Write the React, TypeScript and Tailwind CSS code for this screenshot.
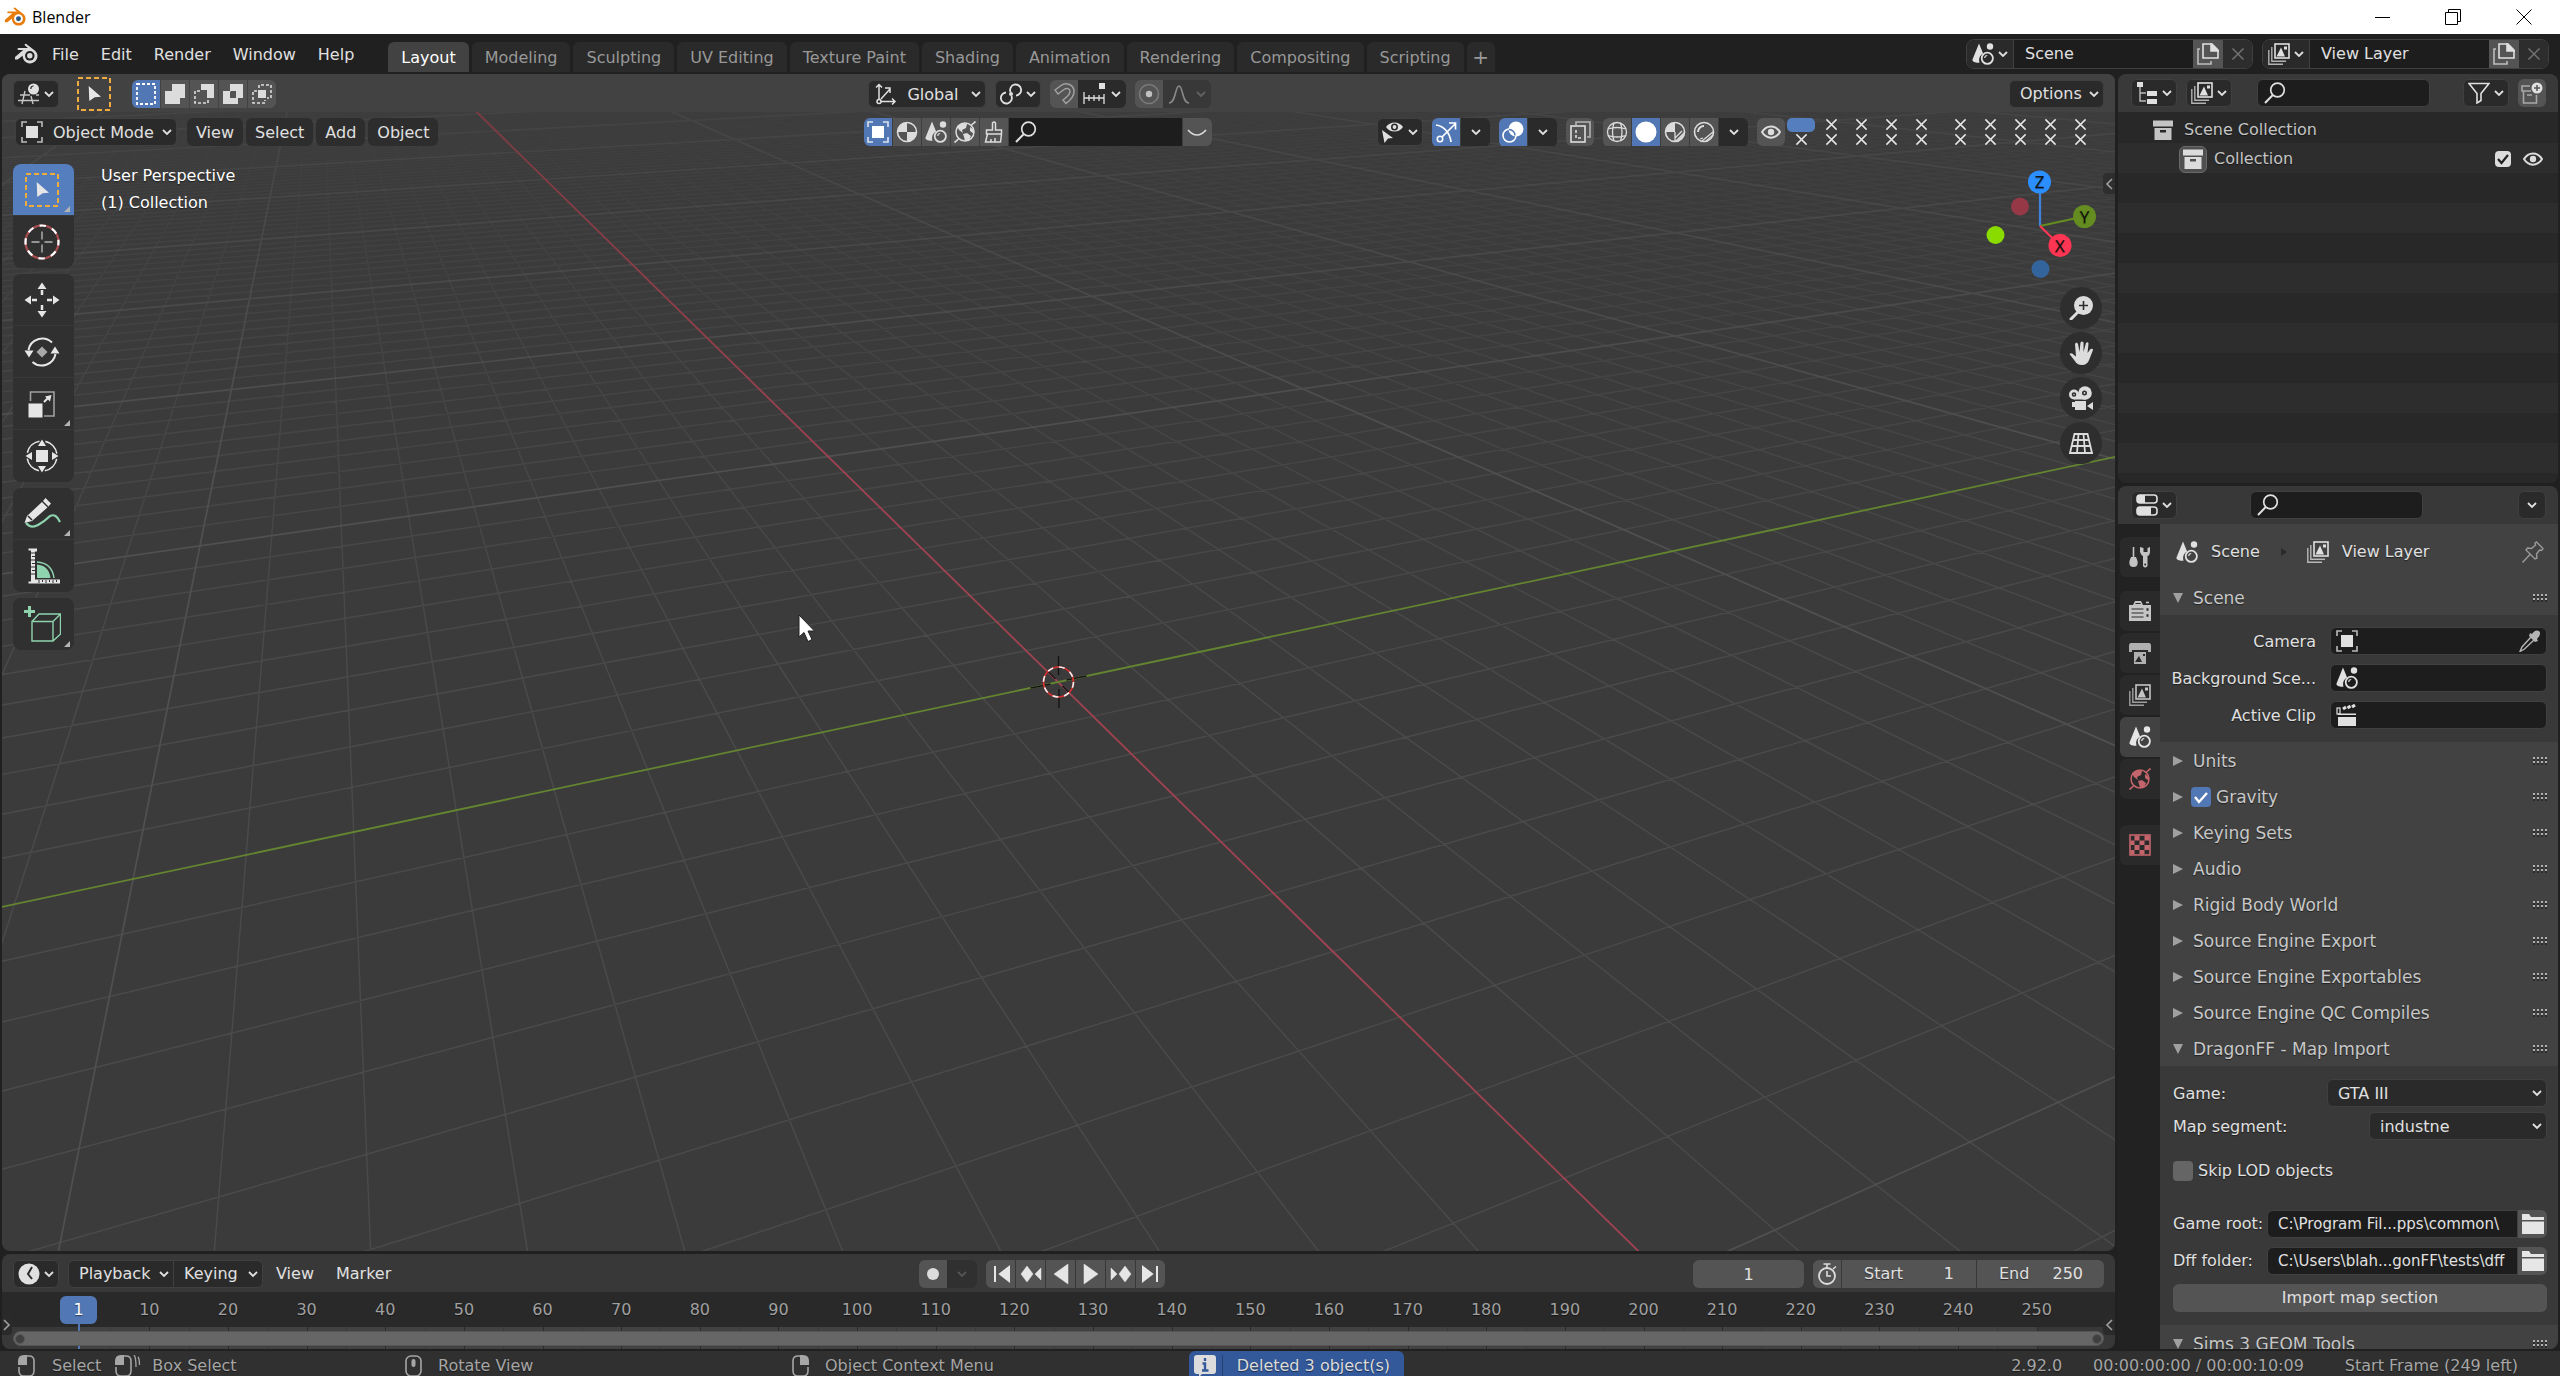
import { ReactNode } from "react";
import clsx from "clsx";

type IconProps = { className?: string };

/* ---------- icons ---------- */

const Svg = ({
  className = "size-[22px]",
  box = "0 0 22 22",
  children,
}: IconProps & { box?: string; children: ReactNode }) => (
  <svg
    viewBox={box}
    className={clsx("shrink-0", className)}
    fill="none"
    stroke="currentColor"
    strokeWidth="1.6"
    aria-hidden="true"
  >
    {children}
  </svg>
);

const Chevron = ({ className = "w-[10px] h-[8px]" }: IconProps) => (
  <Svg box="0 0 10 8" className={className}>
    <path d="M1 2l4 4 4-4" strokeWidth="1.8" />
  </Svg>
);

const BlenderLogo = ({ className, blue }: IconProps & { blue?: boolean }) => (
  <Svg box="0 0 24 24" className={className}>
    <path
      d="M1 17.6h2.6l5-3.8c.2 4.3 3.2 7.6 7.3 7.6 4.2 0 7.6-3.3 7.6-7.3 0-2.3-1-4.2-2.7-5.6L12.3 1.900c-1-.7-2.300.5-1.300 1.500l3 2.500H4.700c-1.600 0-1.600 2 0 2h4.500L1 15z"
      fill="currentColor"
      stroke="none"
    />
    <circle cx="15.8" cy="13.8" r="4.8" fill={blue ? "#fff" : "#202020"} stroke="none" />
    <circle cx="15.8" cy="13.8" r="2.7" fill={blue ? "#265787" : "currentColor"} stroke="none" />
  </Svg>
);

const SceneIcon = ({ className }: IconProps) => (
  <Svg className={className}>
    <path d="M7 .5L.5 16.500c-.6 2 2.500 3.500 7 3.200-1.200-3.700.2-7.500 3.600-9.200z" fill="currentColor" stroke="none" />
    <circle cx="18" cy="3.5" r="3.2" fill="currentColor" stroke="none" />
    <circle cx="15.3" cy="15.3" r="5.6" strokeWidth="1.8" />
    <path d="M12.700 15a2.700 2.700 0 012.500-2.500" strokeWidth="1.2" />
  </Svg>
);

const LayerIcon = ({ className }: IconProps) => (
  <Svg className={className}>
    <path d="M.8 7v14.200H15M3.800 4v14.200H18" strokeWidth="1.4" opacity=".75" />
    <rect x="7" y="1" width="14" height="14" />
    <path d="M8.500 13.500l4.500-9 4 9z" fill="currentColor" stroke="none" />
    <rect x="16" y="3.5" width="3" height="3" fill="currentColor" stroke="none" />
  </Svg>
);

const ObjectIcon = ({ className }: IconProps) => (
  <Svg className={className}>
    <path d="M1 6V1h5M16 1h5v5M21 16v5h-5M6 21H1v-5" opacity=".8" />
    <rect x="5" y="5" width="12" height="12" fill="currentColor" stroke="none" />
  </Svg>
);

const WorldIcon = ({ className }: IconProps) => (
  <Svg className={className}>
    <circle cx="11" cy="11" r="9" strokeWidth="1.5" />
    <path d="M3 5l6-3 4 1-1 4-4 2 1 3-4-3zM9 13l4-1 4 3-2 4-4 1-1-4zM16 6l4 3v4l-4-3z" fill="currentColor" stroke="none" />
    <path d="M17.500 4L21.500.5M4.500 18L.5 21.500" />
  </Svg>
);

const MaterialIcon = ({ className }: IconProps) => (
  <Svg className={className}>
    <circle cx="11" cy="11" r="9.5" />
    <path d="M11 1.500A9.500 9.500 0 001.500 11H11zM11 11v9.500a9.500 9.500 0 009.500-9.500z" fill="currentColor" stroke="none" />
  </Svg>
);

const BrushIcon = () => (
  <Svg>
    <path d="M9.500 9V2q1.500-2 3 0v7h6v4h-15V9zM4.500 13l-2 8h15l1-8M8 21v-3M12 21v-4" strokeWidth="1.5" />
  </Svg>
);

const SearchIcon = ({ className }: IconProps) => (
  <Svg className={className}>
    <circle cx="13.5" cy="8" r="6.8" strokeWidth="1.7" />
    <path d="M8.800 13L1 21" strokeWidth="2" />
  </Svg>
);

const EditorViewportIcon = () => (
  <Svg>
    <path d="M7 8L4 21M13 13l2 8M2 12h10M0 17.500h21M18 12h3" strokeWidth="1.4" opacity=".85" />
    <circle cx="15.5" cy="6" r="5.5" fill="currentColor" stroke="none" />
    <path d="M12.800 6q0-3 2.800-3" stroke="#2a2a2a" strokeWidth="1.2" />
  </Svg>
);

const SelectBoxIcon = ({ className = "size-[36px]" }: IconProps) => (
  <Svg box="0 0 36 36" className={className}>
    <rect x="2" y="2" width="32" height="32" stroke="#f2ac3c" strokeWidth="2" strokeDasharray="5 3" />
    <path d="M12.700 10L25 20.700 18.700 21.300 13.300 25z" fill="#e6e6e6" stroke="none" />
  </Svg>
);

const SelectSetIcon = () => (
  <Svg>
    <rect x="2" y="1" width="18" height="20" strokeDasharray="3 2" strokeWidth="1.8" />
  </Svg>
);
const SelectExtendIcon = () => (
  <Svg>
    <path d="M8 1h13v14h-5v6H1V8h7z" fill="currentColor" stroke="none" />
  </Svg>
);
const SelectSubtractIcon = () => (
  <Svg>
    <path d="M8 1h13v14h-7V7H8z" fill="currentColor" stroke="none" />
    <path d="M7 8H2v12h13v-4" strokeDasharray="3 2" />
  </Svg>
);
const SelectDifferenceIcon = () => (
  <Svg>
    <path d="M8 1h13v14h-5v6H1V8h7zM8 9v6h6V8H9z" fill="currentColor" fillRule="evenodd" stroke="none" />
  </Svg>
);
const SelectIntersectIcon = () => (
  <Svg>
    <rect x="7" y="7" width="8" height="8" fill="currentColor" stroke="none" />
    <path d="M8 5V2h12v13h-4M6 8H2v12h12v-3" strokeDasharray="3 2" />
  </Svg>
);

const AxesIcon = () => (
  <Svg>
    <path d="M4 16V2M1 4.500l3-3 3 3M6 18.500h14M17 15.500l3 3-3 3M6 16L15 6M10 5h5v5" strokeWidth="1.5" />
    <circle cx="4" cy="18.5" r="2" strokeWidth="1.5" />
  </Svg>
);

const PivotIcon = () => (
  <Svg>
    <circle cx="11" cy="11" r="2" fill="currentColor" stroke="none" />
    <path d="M10.500 9A5.500 5.500 0 1116 12.500M11.500 13A5.500 5.500 0 116 9.500" strokeWidth="1.8" />
  </Svg>
);

const MagnetIcon = () => (
  <Svg>
    <path d="M2 7l6-4.500c5-3.500 13-1 13 6 0 5-4 9-8 12l-3-3.500c4-3 7-5.500 7-8.500 0-3-3-4-6-2L5 11z" strokeWidth="1.5" />
  </Svg>
);

const SnapIcon = () => (
  <Svg>
    <path d="M1 9v12M21 11v10M1 15h20M6 12v6M11 12v6M16 12v6" strokeWidth="1.3" />
    <rect x="16" y="0" width="6" height="6" fill="currentColor" stroke="none" />
  </Svg>
);

const ProportionalIcon = () => (
  <Svg>
    <circle cx="11" cy="11" r="9.5" opacity=".35" />
    <circle cx="11" cy="11" r="3.2" fill="currentColor" stroke="none" />
  </Svg>
);

const FalloffIcon = () => (
  <Svg>
    <path d="M1 20C8 20 7 3 11 3s3 17 10 17" />
  </Svg>
);

const VisibilityIcon = () => (
  <Svg>
    <path d="M4 6c4-6 13-6 17 0-4 6-13 6-17 0z" fill="currentColor" stroke="none" />
    <circle cx="12.5" cy="6" r="2.7" stroke="#2a2a2a" />
    <path d="M0 9l11 8-5 .5L2.500 22z" fill="currentColor" stroke="none" />
  </Svg>
);

const GizmoIcon = () => (
  <Svg>
    <path d="M1 4c8 1 14 8 15 17M7 16L20 3M14 2h6.500v6.500" strokeWidth="1.7" />
    <circle cx="5" cy="18" r="2.7" />
  </Svg>
);

const OverlayIcon = () => (
  <Svg>
    <circle cx="14" cy="8" r="7.5" fill="currentColor" stroke="none" />
    <circle cx="7.5" cy="14.5" r="6.5" />
    <path d="M7 8.500a6 6 0 016 6" stroke="#5277b5" strokeWidth="1.5" />
  </Svg>
);

const XrayIcon = () => (
  <Svg>
    <path d="M7 4V1h14v15h-3" opacity=".7" />
    <rect x="2" y="5" width="14" height="16" />
    <path d="M7 9v8h6" strokeDasharray="3 2" />
  </Svg>
);

const WireIcon = () => (
  <Svg>
    <circle cx="11" cy="11" r="9.5" strokeWidth="1.3" />
    <path d="M2 8q9-3 18 0M2 14.500q9 3 18 0M8 2q-3 9 0 18M14.500 2q3 9 0 18" strokeWidth="1.3" />
  </Svg>
);

const SolidIcon = () => (
  <Svg>
    <circle cx="11" cy="11" r="10.5" fill="#fff" stroke="none" />
  </Svg>
);

const ShadedIcon = () => (
  <Svg>
    <circle cx="11" cy="11" r="9.5" />
    <path d="M11 1.500A9.500 9.500 0 001.500 11H11z" fill="currentColor" stroke="none" />
    <path d="M11 11v9M14 20l6-6M11 17l7-7M12 20l8-8" strokeWidth="1.3" />
  </Svg>
);

const RenderedIcon = () => (
  <Svg>
    <circle cx="11" cy="11" r="9.5" />
    <path d="M5 11a6 6 0 016-6" strokeWidth="2" />
    <path d="M9 20l11-9M13 20l7-6M7 18l3-1" strokeWidth="1.3" />
  </Svg>
);

const EyeIcon = ({ className }: IconProps) => (
  <Svg className={className}>
    <path d="M2 11c4.500-7.500 13.500-7.500 18 0-4.500 7.500-13.500 7.500-18 0z" strokeWidth="2" />
    <circle cx="11" cy="11" r="3.2" fill="currentColor" stroke="none" />
  </Svg>
);

const CopyIcon = () => (
  <Svg>
    <path d="M6 1h9l6 6v8H6z" />
    <path d="M14 1v7h7z" fill="currentColor" />
    <path d="M3 6H1v15h13v-3" opacity=".75" />
  </Svg>
);

const CrossIcon = ({ className = "size-[14px]" }: IconProps) => (
  <Svg box="0 0 14 14" className={className}>
    <path d="M1.500 1.500l11 11M12.500 1.500l-11 11" />
  </Svg>
);

const OutlinerIcon = () => (
  <Svg>
    <path d="M4 5v14h6M4 11h6" strokeWidth="1.4" opacity=".8" />
    <path d="M1 0h6v5H1zM11 9h10v5H11zM11 17h10v5H11z" fill="currentColor" stroke="none" />
  </Svg>
);

const FilterIcon = () => (
  <Svg>
    <path d="M1 1.500h20L13 11.500v7L9 21v-9.500z" />
  </Svg>
);

const CollectionIcon = ({ className }: IconProps) => (
  <Svg className={className}>
    <path d="M1 1.500h20v6H1zM2.500 9h17v12h-17zM8 11v2.500h6V11z" fill="currentColor" fillRule="evenodd" stroke="none" />
  </Svg>
);

const NewCollectionIcon = () => (
  <Svg>
    <path d="M9 4H1v5h9M2.500 9v12h13V13M6 13h5" opacity=".6" />
    <circle cx="16" cy="6" r="5.5" fill="currentColor" stroke="none" />
    <path d="M16 3v6M13 6h6" stroke="#555" strokeWidth="1.5" />
  </Svg>
);

const PropertiesIcon = () => (
  <Svg>
    <rect x="1" y="1" width="20" height="8" rx="3" />
    <rect x="1" y="13" width="20" height="8" rx="3" />
    <path d="M3 1h6v8H3q-2 0-2-3V4q0-3 2-3zM3 13h12v8H3q-2 0-2-3v-2q0-3 2-3z" fill="currentColor" stroke="none" />
  </Svg>
);

const ToolTabIcon = () => (
  <Svg>
    <path d="M4.500 1v12" />
    <path d="M2 11h5l1.500 4q1 6-4 6t-4-6z" fill="currentColor" stroke="none" />
    <path d="M11 1v5q1 3 3 4v10q2 3 4.500 0V10q2.500-1 2.500-4V1l-2.500 1v4h-4V2z" fill="currentColor" stroke="none" />
    <circle cx="16.2" cy="18.5" r="1" fill="#2a2a2a" stroke="none" />
  </Svg>
);

const RenderTabIcon = () => (
  <Svg>
    <path d="M0 5h4l2-4h6l2 4h8v16H0z" fill="currentColor" stroke="none" />
    <path d="M2.500 9h12M2.500 13h12M2.500 17h12M6.500 3.500h5" stroke="#2a2a2a" strokeWidth="1.2" />
    <path d="M17.500 9.500h2M17.500 15.500h2" stroke="#2a2a2a" strokeWidth="2.400" />
    <path d="M17 2.500h3" />
  </Svg>
);

const OutputTabIcon = () => (
  <Svg>
    <path d="M2 1h18q2 0 2 3v6h-3V8H3v2H0V4q0-3 2-3zM5 10h12v12H5z" fill="currentColor" stroke="none" />
    <path d="M6 20l4-6 3 6zM14 12h2v2h-2z" fill="#2a2a2a" stroke="none" />
  </Svg>
);

const TextureTabIcon = () => (
  <Svg>
    <rect x="1" y="1" width="20" height="20" />
    <path d="M5.500 1.500h5v5h-5zM15.500 1.500h5v5h-5zM1.500 6.500h4v4.500h-4zM10.500 6.500h5v4.500h-5zM5.500 11h5v5h-5zM15.500 11h5v5h-5zM1.500 16h4v4.500h-4zM10.500 16h5v4.500h-5z" fill="currentColor" stroke="none" />
  </Svg>
);

const PinIcon = () => (
  <Svg>
    <path d="M14.500 1l6.500 6.500-1.500 2-2-.5-3 4 .5 4-2 1L4 9l1.500-2 4 .5 4-3.500-.5-2zM8 13.500l-7.500 8" strokeWidth="1.4" />
  </Svg>
);

const DropperIcon = () => (
  <Svg>
    <path d="M13 4q3-5 7-3 3 3-2 8l1 2-3 1-6-6 1-3z" fill="currentColor" stroke="none" />
    <path d="M12 7l-9 10-2 4.500 4.500-2.500L15 10" strokeWidth="1.4" />
  </Svg>
);

const ClipIcon = () => (
  <Svg>
    <path d="M2 13h18v9H2zM2 9.500h18V11H2z" fill="currentColor" stroke="none" />
    <rect x="1" y="4" width="3" height="6" strokeWidth="1.2" />
    <path d="M7 5l3-2M11.500 4l3-2M16 3l3-2" strokeWidth="3" />
  </Svg>
);

const FolderIcon = () => (
  <Svg>
    <path d="M0 1h7l2 3h13v3H0zM0 8.500h22V21H0z" fill="currentColor" stroke="none" />
  </Svg>
);

const ClockIcon = () => (
  <Svg>
    <circle cx="11" cy="11" r="10.5" fill="currentColor" stroke="none" />
    <path d="M14 4l-4 7 4 5" stroke="#2a2a2a" strokeWidth="2" />
  </Svg>
);

const StopwatchIcon = () => (
  <Svg>
    <circle cx="11" cy="13" r="8" strokeWidth="1.8" />
    <path d="M11 8v5h4M7.500 1h7M11 1v4M17 6l3-2.500" />
  </Svg>
);

const MouseIcon = ({ button }: { button: "left" | "drag" | "middle" | "right" }) => (
  <Svg box="0 0 26 22" className="w-[26px] h-[22px]">
    {(button === "left" || button === "drag") && (
      <>
        <path d="M9 1h2q5 0 5 5v10q0 5-5 5H6q-5 0-5-5v-4" />
        <path d="M0 10V6q0-6 6-6h3v10z" fill="currentColor" stroke="none" />
      </>
    )}
    {button === "middle" && (
      <>
        <rect x="1" y="1" width="15" height="20" rx="5" />
        <rect x="6.5" y="4" width="4" height="8" rx="2" fill="currentColor" stroke="none" />
      </>
    )}
    {button === "right" && (
      <>
        <path d="M8 1H6Q1 1 1 6v10q0 5 5 5h5q5 0 5-5v-4" />
        <path d="M17 10V6q0-6-6-6H8v10z" fill="currentColor" stroke="none" />
      </>
    )}
    {button === "drag" && <path d="M19 0q2 2 2 12M23 2q1.500 2 1.500 8" strokeWidth="1.3" />}
  </Svg>
);

/* tool shelf icons share a 36 unit box */
const CursorToolIcon = () => (
  <Svg box="0 0 36 36" className="size-[36px]">
    <circle cx="18" cy="18" r="16.5" stroke="#a84d50" strokeWidth="2.2" />
    <circle cx="18" cy="18" r="16.5" stroke="#fff" strokeWidth="2.2" strokeDasharray="6.48 6.48" strokeDashoffset="3" />
    <path d="M18 7.500v8M18 20.500v8M7.500 18h8M20.500 18h8" stroke="#b5b5b5" strokeWidth="1.4" />
  </Svg>
);
const MoveToolIcon = () => (
  <Svg box="0 0 36 36" className="size-[36px]">
    <path d="M18 .5l4.500 6.500h-9zM18 35.500l4.500-6.500h-9zM.5 18L7 13.500v9zM35.500 18L29 13.500v9z" fill="currentColor" stroke="none" />
    <path d="M18 8v5M18 23v5M8 18h5M23 18h5" strokeWidth="2.5" />
  </Svg>
);
const RotateToolIcon = () => (
  <Svg box="0 0 36 36" className="size-[36px]">
    <path d="M4.500 16A14 14 0 0128 8.500M31.500 20A14 14 0 018.500 28" strokeWidth="2" />
    <path d="M.5 16.500h9L5 23.500zM26.500 19.500h9L31 12.500z" fill="currentColor" stroke="none" />
    <path d="M18 12.500l5.500 5.500-5.500 5.500-5.500-5.500z" fill="#a8a8a8" stroke="none" />
  </Svg>
);
const ScaleToolIcon = () => (
  <Svg box="0 0 36 36" className="size-[36px]">
    <path d="M6.500 15V6H30v24H20" stroke="#a0a0a0" />
    <rect x="4.5" y="17.5" width="14" height="14" fill="currentColor" stroke="none" />
    <path d="M20 16l4-4" strokeWidth="2" />
    <path d="M27.500 9l-1.500 6.500-5-5z" fill="currentColor" stroke="none" />
  </Svg>
);
const TransformToolIcon = () => (
  <Svg box="0 0 36 36" className="size-[36px]">
    <circle cx="18" cy="18" r="15" strokeDasharray="17.5 6.06" strokeDashoffset="-3" />
    <rect x="12" y="12" width="12" height="12" fill="currentColor" stroke="none" />
    <path d="M18 1.500l4 6.500h-8zM18 34.500l4-6.500h-8zM1.500 18L8 14v8zM34.500 18L28 14v8z" fill="currentColor" stroke="none" />
  </Svg>
);
const AnnotateToolIcon = () => (
  <Svg box="0 0 38 36" className="w-[38px] h-[36px]">
    <path d="M3 27q5 6 12 2t12-9q6-3 10 6" stroke="#8fd3ae" strokeWidth="2.2" />
    <path d="M1.500 27l2.500-7L19 6l5.500 5.500L9 25zM20 5l2.500-3 5.500 5.500-2.500 3z" fill="currentColor" stroke="none" />
    <path d="M5 20l4 4" stroke="#303030" />
  </Svg>
);
const MeasureToolIcon = () => (
  <Svg box="0 0 36 36" className="size-[36px]">
    <path d="M13 14q15 1 17 16" stroke="#8fd3ae" strokeWidth="1.5" />
    <path d="M13 16.500q12 1 13.500 13.500H13z" fill="#8fd3ae" stroke="none" />
    <path d="M4.500.5H13v3H11v28H36v4H4.500v-2H7v-31H4.500z" fill="currentColor" stroke="none" />
    <path d="M11 5h-4M11 8.500h-3M11 12h-4M11 15.500h-3M11 19h-4M11 22.500h-3M11 26h-4M15 32v3M18.500 32v2M22 32v3M25.500 32v2M29 32v3M32.500 32v2" stroke="#303030" strokeWidth="1" />
  </Svg>
);
const AddCubeToolIcon = () => (
  <Svg box="0 0 38 38" className="size-[38px]">
    <g stroke="#8fd3ae">
      <path d="M6.500 1v11M1 6.500h11" strokeWidth="3" />
      <path d="M9 16.500h21V36H9zM9 16.500L16 9h21.500L30 16.500M37.500 9v20L30 36" strokeWidth="1.4" />
    </g>
  </Svg>
);

/* ---------- small building blocks ---------- */

const dark = "bg-[#2a2a2a] border border-[#404040]";
const grey = "bg-[#545454] text-[#dcdcdc]";
const blue = "bg-[#5277b5] text-white";

const DropButton = ({ label, className, children }: { label: string; className?: string; children: ReactNode }) => (
  <button
    aria-label={label}
    className={clsx("flex h-7 w-[46px] shrink-0 items-center justify-center gap-1 rounded-md", dark, className)}
  >
    {children}
    <Chevron />
  </button>
);

const IconButton = ({
  label,
  width = "w-7",
  className,
  children,
}: {
  label: string;
  width?: string;
  className?: string;
  children?: ReactNode;
}) => (
  <button aria-label={label} className={clsx("flex h-7 shrink-0 items-center justify-center", width, className)}>
    {children}
  </button>
);

const SearchField = ({ label, className }: { label: string; className?: string }) => (
  <label className={clsx("flex h-7 items-center bg-[#1d1d1d] pl-[6px]", className)}>
    <SearchIcon />
    <input type="text" aria-label={label} className="min-w-0 flex-1 bg-transparent outline-none" />
  </label>
);

const Picker = ({
  id,
  label,
  value,
  className,
  children,
}: {
  id?: string;
  label?: string;
  value: string;
  className?: string;
  children?: ReactNode;
}) => (
  <div className={clsx("relative flex h-7 shrink-0 items-center rounded-md", dark, className)}>
    {children}
    <select id={id} aria-label={label} className="h-full w-full appearance-none pt-px pl-[10px] outline-none">
      <option>{value}</option>
    </select>
    <Chevron className="pointer-events-none absolute right-[4px] w-[10px] h-[8px]" />
  </div>
);

/* ---------- viewport ---------- */

const FOCAL = 1467;
const DISTANCE = 18.1;
const NEAR = 1;

const depthAt = (x: number, y: number) => DISTANCE - 0.817 * x + 0.365 * y;

const project = (x: number, y: number) => {
  const d = depthAt(x, y);
  const sx = 1056 + (FOCAL * (0.412 * x + 0.911 * y)) / d;
  const sy = 608 - (FOCAL * (-0.404 * x + 0.194 * y)) / d;
  return `${sx.toFixed(1)} ${sy.toFixed(1)}`;
};

// clips a floor segment against the near plane and returns its path
const floorLine = (x1: number, y1: number, x2: number, y2: number) => {
  let a = [x1, y1];
  let b = [x2, y2];
  const da = depthAt(x1, y1);
  const db = depthAt(x2, y2);
  if (da < NEAR && db < NEAR) return "";
  if (da < NEAR || db < NEAR) {
    const t = (NEAR - da) / (db - da);
    const cut = [x1 + t * (x2 - x1), y1 + t * (y2 - y1)];
    if (da < NEAR) a = cut;
    else b = cut;
  }
  return `M${project(a[0], a[1])}L${project(b[0], b[1])}`;
};

const FLOOR = 160;
let minor = "";
let major = "";
for (let i = -FLOOR; i <= FLOOR; i++) {
  if (i === 0) continue;
  const d = floorLine(i, -FLOOR, i, FLOOR) + floorLine(-FLOOR, i, FLOOR, i);
  if (i % 10 === 0) major += d;
  else minor += d;
}

const FloorGrid = () => (
  <svg
    viewBox="0 0 2113 1177"
    preserveAspectRatio="xMidYMid slice"
    className="absolute inset-0 size-full"
    fill="none"
    aria-hidden="true"
  >
    <defs>
      <linearGradient id="minorFade" gradientUnits="userSpaceOnUse" x1="0" y1="38" x2="0" y2="600">
        <stop offset="0" stopColor="#4a4a4a" stopOpacity=".15" />
        <stop offset=".4" stopColor="#4a4a4a" stopOpacity=".6" />
        <stop offset="1" stopColor="#4a4a4a" />
      </linearGradient>
      <linearGradient id="majorFade" gradientUnits="userSpaceOnUse" x1="0" y1="38" x2="0" y2="400">
        <stop offset="0" stopColor="#505050" stopOpacity=".4" />
        <stop offset="1" stopColor="#505050" />
      </linearGradient>
      <linearGradient id="redFade" gradientUnits="userSpaceOnUse" x1="0" y1="38" x2="0" y2="400">
        <stop offset="0" stopColor="#7c3a42" />
        <stop offset="1" stopColor="#a04250" />
      </linearGradient>
    </defs>
    <path d={minor} stroke="url(#minorFade)" strokeWidth="1.4" />
    <path d={major} stroke="url(#majorFade)" strokeWidth="1.7" />
    <path d={floorLine(-FLOOR, 0, FLOOR, 0)} stroke="url(#redFade)" strokeWidth="1.8" />
    <path d={floorLine(0, -FLOOR, 0, FLOOR)} stroke="#648530" strokeWidth="1.8" />
    <g transform="translate(1056.5 608)">
      <path d="M0-26V-7M.5 7V26M-28 6l20-4M8-2l20-4M-10-10L-3-3M4 4l7 7" stroke="#161616" strokeWidth="1.4" />
      <circle r="15" stroke="#d3302f" />
      <circle r="15" stroke="#d3302f" strokeWidth="1.6" />
      <circle r="15" stroke="#f2f2f2" strokeWidth="1.6" strokeDasharray="5.89 5.89" />
    </g>
    <path d="M797 541v22l5-4.500 4 9 4-2-4-8.500h6.500z" fill="#fff" stroke="#222" strokeWidth="1" />
  </svg>
);

const AxisGizmo = () => (
  <svg
    viewBox="0 0 116 116"
    className="mr-1 size-[116px]"
    fontFamily="'Open Sans', sans-serif"
    fontSize="17"
    textAnchor="middle"
  >
    <circle cx="38" cy="38.5" r="9" fill="#963845" />
    <circle cx="58.5" cy="101" r="9" fill="#34649c" />
    <path d="M58 58V14" stroke="#3f83db" strokeWidth="2.2" />
    <path d="M58 58l44-9.500" stroke="#648c20" strokeWidth="2.2" />
    <path d="M58 58l20 19.500" stroke="#ff3653" strokeWidth="2.2" />
    <circle cx="13.5" cy="67" r="9" fill="#8adb00" />
    <circle cx="102.5" cy="48.5" r="11.5" fill="#648c20" />
    <text x="102.5" y="54.5" fill="#111">Y</text>
    <circle cx="57.5" cy="14" r="11.5" fill="#2c8fff" />
    <text x="57.5" y="20" fill="#111">Z</text>
    <circle cx="78" cy="77.5" r="11.5" fill="#ff3653" />
    <text x="78" y="83.5" fill="#111">X</text>
  </svg>
);

const navButtons = [
  {
    label: "Zoom",
    icon: (
      <>
        <circle cx="14.5" cy="9.5" r="9.5" fill="currentColor" stroke="none" />
        <path d="M9 16l-7 7" strokeWidth="3" strokeLinecap="round" />
        <path d="M14.500 5v9M10 9.500h9" stroke="#2e2e2e" />
      </>
    ),
  },
  {
    label: "Move view",
    icon: (
      <path
        d="M.5 13q2-2 5 1.500l1.500 1L6 3q1.500-3 3 0l1.500 8L11.500 1.500q1.500-2 3 0v9.500l2.500-9q2-1.500 2.500.5L18.500 12l3-4q2.500-1 2.500 1l-3.500 9q-2 6-7.500 6-5 0-7.500-4.500z"
        fill="currentColor"
        stroke="none"
      />
    ),
  },
  {
    label: "Camera view",
    icon: (
      <>
        <circle cx="5" cy="8.5" r="5" fill="currentColor" stroke="none" />
        <circle cx="16" cy="7" r="6.8" fill="currentColor" stroke="none" />
        <path d="M5 8h12v5.500H5zM6 15h11v9H6zM3 16h3v5H3zM18 20l6-4v8z" fill="currentColor" stroke="none" />
        <circle cx="5" cy="8.5" r="1.5" stroke="#2e2e2e" />
        <circle cx="15.5" cy="7" r="1.7" stroke="#2e2e2e" />
      </>
    ),
  },
  {
    label: "Perspective",
    icon: <path d="M5.500 3h13L23 22H1zM4 9h16M2.500 15h19M9.500 3L8 22M14.500 3L16 22" strokeWidth="1.8" />,
  },
];

const toolGroups = [
  [
    { label: "Select Box", icon: <SelectBoxIcon />, active: true, more: true },
    { label: "Cursor", icon: <CursorToolIcon /> },
  ],
  [
    { label: "Move", icon: <MoveToolIcon /> },
    { label: "Rotate", icon: <RotateToolIcon /> },
    { label: "Scale", icon: <ScaleToolIcon />, more: true },
    { label: "Transform", icon: <TransformToolIcon /> },
  ],
  [
    { label: "Annotate", icon: <AnnotateToolIcon />, more: true },
    { label: "Measure", icon: <MeasureToolIcon /> },
  ],
  [{ label: "Add Cube", icon: <AddCubeToolIcon />, more: true }],
];

const LayerCells = ({ first }: { first?: boolean }) => (
  <div className="grid grid-cols-5 gap-x-[2px] gap-y-[1px]">
    {Array.from({ length: 10 }, (_, i) => (
      <button
        key={i}
        aria-label={`Layer ${i + 1}`}
        className={clsx(
          "flex h-[14px] w-7 items-center justify-center rounded-[5px] text-[#e6e6e6]",
          first && i === 0 && "bg-[#557ebf]"
        )}
      >
        {!(first && i === 0) && <CrossIcon className="size-[13px]" />}
      </button>
    ))}
  </div>
);

const Viewport = () => (
  <section className="relative flex min-h-0 flex-1 flex-col overflow-hidden rounded-lg bg-[#3b3b3b]">
    <FloorGrid />
    <div className="relative flex h-[38px] shrink-0 items-center bg-[#424242] px-[11px] pt-[2px]">
      <DropButton label="Editor type">
        <EditorViewportIcon />
      </DropButton>
      <div className="ml-[17px] mr-5">
        <SelectBoxIcon />
      </div>
      <div className="flex gap-px overflow-hidden rounded-md">
        <IconButton label="Set selection" className={blue}><SelectSetIcon /></IconButton>
        <IconButton label="Extend selection" className={grey}><SelectExtendIcon /></IconButton>
        <IconButton label="Subtract selection" className={grey}><SelectSubtractIcon /></IconButton>
        <IconButton label="Invert selection" className={grey}><SelectDifferenceIcon /></IconButton>
        <IconButton label="Intersect selection" className={grey}><SelectIntersectIcon /></IconButton>
      </div>
      <div className="grow-26" />
      <div className="flex gap-[9px]">
        <Picker label="Orientation" value="Global" className="w-[118px] pl-[6px]">
          <AxesIcon />
        </Picker>
        <DropButton label="Pivot point"><PivotIcon /></DropButton>
        <div className="flex overflow-hidden rounded-md">
          <IconButton label="Snap" className="bg-[#545454] text-[#a0a0a0]"><MagnetIcon /></IconButton>
          <button aria-label="Snapping" className="flex w-12 items-center justify-center gap-[6px] bg-[#2a2a2a]">
            <SnapIcon />
            <Chevron />
          </button>
        </div>
        <div className="flex overflow-hidden rounded-md">
          <IconButton label="Proportional editing" className="bg-[#545454] text-[#c0c0c0]"><ProportionalIcon /></IconButton>
          <button aria-label="Falloff" className="flex w-12 items-center justify-center gap-[6px] bg-[#383838] text-[#8a8a8a]">
            <FalloffIcon />
            <Chevron className="w-[10px] h-[8px] opacity-50" />
          </button>
        </div>
      </div>
      <div className="grow-35" />
      <button className={clsx("flex h-7 w-[95px] items-center justify-between rounded-md pl-[10px] pr-1", dark)}>
        Options
        <Chevron />
      </button>
    </div>

    <div className="relative mt-[6px] flex h-7 shrink-0 items-center pl-[13px] pr-[21px]">
      <Picker label="Mode" value="Object Mode" className="w-[162px] pl-[5px]">
        <ObjectIcon />
      </Picker>
      <nav className="ml-[10px] flex gap-[3px]">
        {["View", "Select", "Add", "Object"].map((item) => (
          <button key={item} className="h-7 rounded-md bg-[#2d2d2d] px-[9px] pt-px">
            {item}
          </button>
        ))}
      </nav>
      <div className="grow-18" />
      <div className="flex gap-px overflow-hidden rounded-md">
        <IconButton label="Object filter" className={blue}><ObjectIcon /></IconButton>
        <IconButton label="Material filter" className={grey}><MaterialIcon /></IconButton>
        <IconButton label="Scene filter" className={grey}><SceneIcon /></IconButton>
        <IconButton label="World filter" className={grey}><WorldIcon /></IconButton>
        <IconButton label="Brush filter" className={grey}><BrushIcon /></IconButton>
        <SearchField label="Search data" className="w-[173px]" />
        <IconButton label="Expand" width="w-[29px]" className={grey}>
          <Svg>
            <path d="M2 9q9 10 18 0" />
          </Svg>
        </IconButton>
      </div>
      <div className="grow-7" />
      <div className="flex gap-[9px]">
        <DropButton label="Visibility"><VisibilityIcon /></DropButton>
        <div className="flex gap-px overflow-hidden rounded-md">
          <IconButton label="Gizmos" className={blue}><GizmoIcon /></IconButton>
          <IconButton label="Gizmo options" width="w-[29px]" className="bg-[#2a2a2a]"><Chevron /></IconButton>
        </div>
        <div className="flex gap-px overflow-hidden rounded-md">
          <IconButton label="Overlays" className={blue}><OverlayIcon /></IconButton>
          <IconButton label="Overlay options" width="w-[29px]" className="bg-[#2a2a2a]"><Chevron /></IconButton>
        </div>
        <IconButton label="X-ray" className={clsx("rounded-md", grey)}><XrayIcon /></IconButton>
        <div className="flex gap-px overflow-hidden rounded-md">
          <IconButton label="Wireframe" className={grey}><WireIcon /></IconButton>
          <IconButton label="Solid" className={blue}><SolidIcon /></IconButton>
          <IconButton label="Material preview" className={grey}><ShadedIcon /></IconButton>
          <IconButton label="Rendered" className={grey}><RenderedIcon /></IconButton>
          <IconButton label="Shading options" width="w-[29px]" className="bg-[#2a2a2a]"><Chevron /></IconButton>
        </div>
        <div className="flex gap-[2px]">
          <IconButton label="Show layers" className={clsx("rounded-md", grey)}><EyeIcon /></IconButton>
          <div className="flex gap-[11px]">
            <LayerCells first />
            <LayerCells />
          </div>
        </div>
      </div>
    </div>

    <div className="relative mt-[18px] flex pl-[11px]">
      <div className="flex flex-col gap-[6px]">
        {toolGroups.map((group, i) => (
          <div key={i} className="flex w-[61px] flex-col overflow-hidden rounded-lg bg-[#303030]">
            {group.map((tool) => (
              <button
                key={tool.label}
                aria-label={tool.label}
                className={clsx(
                  "relative flex h-[52px] items-center justify-center border-b border-[#393939] pr-[3px] text-[#e6e6e6] last:border-b-0",
                  "active" in tool && "bg-[#557ebf]"
                )}
              >
                {tool.icon}
                {"more" in tool && (
                  <svg viewBox="0 0 6 6" className="absolute bottom-[3px] right-1 size-[6px]" aria-hidden="true">
                    <path d="M6 0v6H0z" fill="#b4b4b4" />
                  </svg>
                )}
              </button>
            ))}
          </div>
        ))}
      </div>
      <div className="ml-[27px] -mt-[2px] leading-[27px] text-white">
        <p>User Perspective</p>
        <p>(1) Collection</p>
      </div>
    </div>

    <div className="absolute right-[13px] top-[94px] flex flex-col items-end">
      <AxisGizmo />
      <div className="mt-[3px] flex flex-col gap-[3px]">
        {navButtons.map((nav) => (
          <button
            key={nav.label}
            aria-label={nav.label}
            className="flex size-[42px] items-center justify-center rounded-full bg-[#2e2e2e] text-[#dcdcdc]"
          >
            <Svg box="0 0 24 24" className="size-6">{nav.icon}</Svg>
          </button>
        ))}
      </div>
    </div>
    <button
      aria-label="Open sidebar"
      className="absolute right-0 top-[99px] flex h-[21px] w-3 items-center justify-center rounded-l bg-[#2e2e2e] text-[#a0a0a0]"
    >
      <Svg box="0 0 8 12" className="w-2 h-3"><path d="M7 1L2 6l5 5" /></Svg>
    </button>
  </section>
);

/* ---------- timeline ---------- */

const transport = [
  { label: "Jump to start", d: "M5 3v16M19 4v14l-9-7z" },
  { label: "Previous keyframe", d: "M7 3l6 8-6 8-6-8zM21 5v12l-6-6z" },
  { label: "Play backwards", d: "M18 1v20L4 11z" },
  { label: "Play", d: "M4 1v20l14-10z" },
  { label: "Next keyframe", d: "M15 3l6 8-6 8-6-8zM1 5v12l6-6z" },
  { label: "Jump to end", d: "M17 3v16M3 4v14l9-7z" },
];

const frames = Array.from({ length: 25 }, (_, i) => (i + 1) * 10);

const Timeline = () => (
  <section className="relative flex h-[95px] shrink-0 flex-col overflow-hidden rounded-lg bg-[#383838]">
    <div className="flex h-[38px] shrink-0 items-center px-[11px] pt-[2px]">
      <DropButton label="Timeline editor"><ClockIcon /></DropButton>
      <div className={clsx("ml-[9px] flex h-7 rounded-md", dark)}>
        <button className="flex w-[105px] items-center justify-between border-r border-[#404040] pl-[10px] pr-1">
          Playback <Chevron />
        </button>
        <button className="flex w-[88px] items-center justify-between pl-[10px] pr-1">
          Keying <Chevron />
        </button>
      </div>
      <button className="ml-[13px]">View</button>
      <button className="ml-[22px]">Marker</button>
      <div className="grow" />
      <div className="flex overflow-hidden rounded-md">
        <IconButton label="Auto keying" className={grey}>
          <Svg><circle cx="11" cy="11" r="6" fill="currentColor" stroke="none" /></Svg>
        </IconButton>
        <IconButton label="Auto keying options" width="w-[30px]" className="bg-[#303030] text-[#555]"><Chevron /></IconButton>
      </div>
      <div className="ml-[9px] flex gap-px overflow-hidden rounded-md">
        {transport.map((item) => (
          <IconButton key={item.label} label={item.label} width="w-[29px]" className="bg-[#545454] text-[#e6e6e6]">
            <Svg>
              <path d={item.d} fill="currentColor" strokeWidth={item.label.startsWith("Jump") ? 2 : 0.5} />
            </Svg>
          </IconButton>
        ))}
      </div>
      <div className="grow" />
      <input
        aria-label="Current frame"
        defaultValue="1"
        className="h-7 w-[111px] rounded-md bg-[#545454] text-center outline-none"
      />
      <div className="ml-[9px] flex h-7 gap-px overflow-hidden rounded-md">
        <IconButton label="Use preview range" className={grey}><StopwatchIcon /></IconButton>
        <label className="flex w-[134px] items-center bg-[#545454] pl-[22px] pr-[22px]">
          Start
          <input defaultValue="1" className="w-0 min-w-0 flex-1 text-right outline-none" />
        </label>
        <label className="flex w-[127px] items-center bg-[#545454] pl-[22px] pr-[21px]">
          End
          <input defaultValue="250" className="w-0 min-w-0 flex-1 text-right outline-none" />
        </label>
      </div>
    </div>

    <div className="relative flex flex-1 flex-col">
      <div className="flex h-[35px] items-center bg-[#292929] pt-px pl-[108px] pr-[39px] text-[#a0a0a0]">
        {frames.map((frame) => (
          <span key={frame} className="min-w-0 flex-1 text-center">
            {frame}
          </span>
        ))}
      </div>
      <div className="flex flex-1 pl-[76px] pr-[39px]">
        <div className="w-8 bg-[#424242]" />
        {frames.map((frame) => (
          <div key={frame} className="flex flex-1">
            <div className="flex-1 border-l border-[#3a3a3a] bg-[#424242]" />
            <div className={clsx("flex-1 border-l border-[#2c2c2c]", frame !== 250 && "bg-[#424242]")} />
          </div>
        ))}
      </div>
      <div className="absolute left-[76px] top-7 h-full w-[2px] bg-[#5277b5]" />
      <div className="absolute left-[58px] top-1 flex h-7 w-[37px] items-center justify-center rounded-md bg-[#5277b5] text-white">
        1
      </div>
      <div className="absolute inset-x-[11px] bottom-[3px] flex h-[15px] items-center justify-between rounded-full border border-[#555] bg-[#666] px-px">
        <span className="size-[10px] rounded-full border border-[#585858] bg-[#404040]" />
        <span className="size-[10px] rounded-full border border-[#585858] bg-[#404040]" />
      </div>
      <button
        aria-label="Open channels"
        className="absolute left-0 top-[22px] flex h-[21px] w-[10px] items-center justify-center rounded-r bg-[#2a2a2a] text-[#a0a0a0]"
      >
        <Svg box="0 0 8 12" className="w-2 h-3"><path d="M1 1l5 5-5 5" /></Svg>
      </button>
      <button
        aria-label="Open timeline sidebar"
        className="absolute right-0 top-[22px] flex h-[21px] w-3 items-center justify-center rounded-l bg-[#2a2a2a] text-[#a0a0a0]"
      >
        <Svg box="0 0 8 12" className="w-2 h-3"><path d="M7 1L2 6l5 5" /></Svg>
      </button>
    </div>
  </section>
);

/* ---------- outliner ---------- */

const Outliner = () => (
  <section className="flex h-[409px] shrink-0 flex-col overflow-hidden rounded-lg bg-[#282828]">
    <div className="flex h-[38px] shrink-0 items-center bg-[#393939] px-3">
      <DropButton label="Outliner editor" className="ml-px"><OutlinerIcon /></DropButton>
      <DropButton label="Display mode" className="ml-[9px]"><LayerIcon /></DropButton>
      <SearchField label="Filter outliner" className="ml-[25px] w-[173px] rounded-md border border-[#404040]" />
      <DropButton label="Filter" className="ml-auto"><FilterIcon /></DropButton>
      <IconButton label="New collection" className="ml-[9px] rounded-md bg-[#545454]"><NewCollectionIcon /></IconButton>
    </div>
    <div className="text-[#c4c4c4]">
      <div className="flex h-[31px] items-center gap-[10px] pt-1 pl-[34px]">
        <CollectionIcon />
        Scene Collection
      </div>
      <div className="flex h-[30px] items-center bg-[#2d2d2d] pt-[2px] pl-[61px] pr-[14px]">
        <span className="flex h-[27px] w-7 items-center justify-center rounded-md border border-[#6a6a6a] bg-[#505050] text-[#dcdcdc]">
          <CollectionIcon />
        </span>
        <span className="ml-[7px] flex-1">Collection</span>
        <label className="relative mr-[11px] flex size-4">
          <input type="checkbox" defaultChecked aria-label="Exclude from view layer" className="size-4 appearance-none rounded-sm bg-[#dcdcdc]" />
          <Svg box="0 0 16 16" className="pointer-events-none absolute inset-0 size-4 text-[#222]">
            <path d="M3 8l3.500 4L13 4" strokeWidth="2.2" />
          </Svg>
        </label>
        <button aria-label="Hide in viewport"><EyeIcon className="size-[22px] text-[#dcdcdc]" /></button>
      </div>
    </div>
    {Array.from({ length: 11 }, (_, i) => (
      <div key={i} className="h-[30px] shrink-0 even:bg-[#2d2d2d] odd:bg-[#282828]" />
    ))}
  </section>
);

/* ---------- properties ---------- */

const tabs = [
  { label: "Tool", icon: <ToolTabIcon />, className: "mt-[13px] bg-[#2a2a2a] text-[#c4c4c4]" },
  { label: "Render", icon: <RenderTabIcon />, className: "mt-[14px] bg-[#2a2a2a] text-[#c4c4c4]" },
  { label: "Output", icon: <OutputTabIcon />, className: "mt-[2px] bg-[#2a2a2a] text-[#b0b0b0]" },
  { label: "View Layer", icon: <LayerIcon />, className: "mt-[2px] bg-[#2a2a2a] text-[#c4c4c4]" },
  { label: "Scene", icon: <SceneIcon />, className: "mt-[2px] bg-[#424242] text-[#e6e6e6]" },
  { label: "World", icon: <WorldIcon />, className: "mt-[2px] bg-[#2a2a2a] text-[#c4656c]" },
  { label: "Texture", icon: <TextureTabIcon />, className: "mt-[26px] bg-[#2a2a2a] text-[#c4656c]" },
];

const PanelHeader = ({ title, open, checked }: { title: string; open?: boolean; checked?: boolean }) => (
  <div className="flex h-9 shrink-0 items-center pt-px pl-[13px] pr-[11px] text-[17px] text-[#c8c8c8]">
    <button className="flex items-center" aria-expanded={!!open} aria-label={title}>
      <svg viewBox="0 0 10 10" className="size-[10px]" aria-hidden="true">
        <path d={open ? "M0 0h10L5 10z" : "M0 0v10l10-5z"} fill="#a0a0a0" />
      </svg>
    </button>
    {checked ? (
      <label className="ml-2 flex items-center gap-[5px]">
        <span className="relative flex size-5">
          <input type="checkbox" defaultChecked className="size-5 appearance-none rounded bg-[#5277b5]" />
          <Svg box="0 0 20 20" className="pointer-events-none absolute inset-0 size-5 text-white">
            <path d="M4 10l4 5 8-9" strokeWidth="2.4" />
          </Svg>
        </span>
        {title}
      </label>
    ) : (
      <span className="ml-[10px]">{title}</span>
    )}
    <svg viewBox="0 0 14 8" className="ml-auto w-[14px] h-2" aria-hidden="true">
      <path d="M0 1h14M0 5h14" stroke="#b0b0b0" strokeWidth="2" strokeDasharray="2 2" />
      <path d="M0 3h14M0 7h14" stroke="#141414" strokeWidth="1.2" strokeDasharray="2 2" />
    </svg>
  </div>
);

const dataFields = [
  { id: "camera", label: "Camera", icon: <ObjectIcon />, pick: true },
  { id: "background", label: "Background Sce...", icon: <SceneIcon /> },
  { id: "clip", label: "Active Clip", icon: <ClipIcon /> },
];

const pathFields = [
  { id: "game-root", label: "Game root:", value: "C:\\Program Fil...pps\\common\\" },
  { id: "dff-folder", label: "Dff folder:", value: "C:\\Users\\blah...gonFF\\tests\\dff" },
];

const Properties = () => (
  <section className="flex min-h-0 flex-1 flex-col overflow-hidden rounded-lg bg-[#222222]">
    <div className="flex h-[38px] shrink-0 items-center bg-[#383838] px-3">
      <DropButton label="Properties editor" className="ml-px"><PropertiesIcon /></DropButton>
      <SearchField label="Search properties" className="ml-[73px] w-[173px] rounded-md border border-[#404040]" />
      <IconButton label="Options" className={clsx("ml-auto rounded-md", dark)}><Chevron /></IconButton>
    </div>
    <div className="flex min-h-0 flex-1">
      <div className="flex w-[42px] shrink-0 flex-col pl-[2px]">
        {tabs.map((tab) => (
          <button
            key={tab.label}
            aria-label={tab.label}
            className={clsx("flex h-10 w-10 shrink-0 items-center justify-center rounded-l-md", tab.className)}
          >
            {tab.icon}
          </button>
        ))}
      </div>
      <div className="flex min-w-0 flex-1 flex-col overflow-hidden bg-[#424242]">
        <div className="flex h-[55px] shrink-0 items-center pl-4 pr-[14px]">
          <SceneIcon />
          <span className="ml-[13px]">Scene</span>
          <svg viewBox="0 0 6 8" className="ml-[21px] w-[6px] h-2" aria-hidden="true">
            <path d="M0 0v8l6-4z" fill="#2a2a2a" />
          </svg>
          <span className="ml-5"><LayerIcon /></span>
          <span className="ml-[13px]">View Layer</span>
          <button aria-label="Pin" className="ml-auto text-[#9a9a9a]"><PinIcon /></button>
        </div>
        <PanelHeader title="Scene" open />
        <div className="flex shrink-0 flex-col gap-[9px] bg-[#393939] pt-3 pr-[11px] pb-[13px] pl-2">
          {dataFields.map((field) => (
            <div key={field.id} className="flex items-center">
              <label htmlFor={field.id} className="flex-1 whitespace-nowrap pt-px pr-[14px] text-right">
                {field.label}
              </label>
              <div className="flex h-7 w-[217px] shrink-0 items-center rounded-md border border-[#404040] bg-[#1d1d1d] px-[5px]">
                {field.icon}
                <input id={field.id} className="min-w-0 flex-1 px-2 outline-none" />
                {field.pick && (
                  <button aria-label="Eyedropper" className="text-[#b4b4b4]"><DropperIcon /></button>
                )}
              </div>
            </div>
          ))}
        </div>
        <PanelHeader title="Units" />
        <PanelHeader title="Gravity" checked />
        <PanelHeader title="Keying Sets" />
        <PanelHeader title="Audio" />
        <PanelHeader title="Rigid Body World" />
        <PanelHeader title="Source Engine Export" />
        <PanelHeader title="Source Engine Exportables" />
        <PanelHeader title="Source Engine QC Compiles" />
        <PanelHeader title="DragonFF - Map Import" open />
        <div className="shrink-0 bg-[#393939] py-[13px] pr-[11px] pl-[13px]">
          <div className="flex items-center justify-between">
            <label htmlFor="game" className="pt-px">Game:</label>
            <Picker id="game" value="GTA III" className="w-[220px]" />
          </div>
          <div className="mt-[5px] flex items-center justify-between">
            <label htmlFor="segment" className="pt-px">Map segment:</label>
            <Picker id="segment" value="industne" className="w-[178px]" />
          </div>
          <label className="mt-[21px] flex items-center gap-[5px]">
            <input type="checkbox" className="size-5 appearance-none rounded bg-[#656565]" />
            Skip LOD objects
          </label>
          <div className="mt-[29px] flex flex-col gap-[9px]">
            {pathFields.map((field) => (
              <div key={field.id} className="flex items-center">
                <label htmlFor={field.id} className="flex-1 whitespace-nowrap">{field.label}</label>
                <input
                  id={field.id}
                  defaultValue={field.value}
                  className="h-7 w-[251px] rounded-l-md border border-[#404040] bg-[#1d1d1d] pl-[10px] text-[15px] outline-none"
                />
                <IconButton label={`Browse ${field.label}`} width="w-[29px]" className="rounded-r-md bg-[#545454] text-[#e6e6e6]">
                  <FolderIcon />
                </IconButton>
              </div>
            ))}
            <button className="h-7 rounded-md bg-[#545454]">Import map section</button>
          </div>
        </div>
        <PanelHeader title="Sims 3 GEOM Tools" open />
      </div>
    </div>
  </section>
);

/* ---------- window chrome ---------- */

const menus = ["File", "Edit", "Render", "Window", "Help"];
const workspaces = [
  "Layout",
  "Modeling",
  "Sculpting",
  "UV Editing",
  "Texture Paint",
  "Shading",
  "Animation",
  "Rendering",
  "Compositing",
  "Scripting",
  "+",
];

const DataBlock = ({ name, children }: { name: string; children: ReactNode }) => (
  <div className="flex h-[30px] overflow-hidden rounded-lg border border-[#404040]">
    <button aria-label={`Browse ${name}`} className="flex w-[46px] items-center justify-center gap-1 bg-[#2a2a2a]">
      {children}
      <Chevron />
    </button>
    <input
      aria-label={name}
      defaultValue={name}
      className="w-[180px] border-l border-[#404040] bg-[#1d1d1d] pl-[11px] outline-none"
    />
    <IconButton label={`New ${name}`} width="w-[30px]" className="bg-[#545454]"><CopyIcon /></IconButton>
    <IconButton label={`Remove ${name}`} width="w-[29px]" className="bg-[#2d2d2d] text-[#707070]"><CrossIcon /></IconButton>
  </div>
);

const TitleBar = () => (
  <header className="flex h-[34px] shrink-0 items-center bg-white pl-1 font-['Open_Sans',sans-serif] text-black text-shadow-none">
    <BlenderLogo blue className="size-[22px] text-[#e87d0d]" />
    <h1 className="ml-[6px]">Blender</h1>
    <div className="ml-auto flex">
      <button aria-label="Minimize" className="flex w-[70px] justify-center">
        <Svg box="0 0 16 16" className="size-4"><path d="M0 8.500h15" strokeWidth="1" /></Svg>
      </button>
      <button aria-label="Restore" className="flex w-[70px] justify-center">
        <Svg box="0 0 16 16" className="size-4">
          <path d="M.5 3.500h12v12H.5zM3.500 3.500v-3h12v12h-3" strokeWidth="1" />
        </Svg>
      </button>
      <button aria-label="Close" className="flex w-[72px] justify-center">
        <Svg box="0 0 16 16" className="size-4"><path d="M.5.5l15 15M15.500.5l-15 15" strokeWidth="1" /></Svg>
      </button>
    </div>
  </header>
);

const MenuBar = () => (
  <div className="flex h-10 shrink-0 pl-[14px] pr-[11px]">
    <BlenderLogo className="mt-2 size-6 text-[#dcdcdc]" />
    <nav className="ml-[14px] flex gap-[22px] pt-px">
      {menus.map((menu) => (
        <button key={menu}>{menu}</button>
      ))}
    </nav>
    <nav className="mt-2 ml-[34px] flex h-[30px] gap-[3px]">
      {workspaces.map((name, i) => (
        <button
          key={name}
          className={clsx(
            "rounded-t-md",
            name === "+" ? "w-7 text-xl" : "px-[13px] pt-px",
            i === 0 ? "bg-[#424242] text-white" : "bg-[#2a2a2a] text-[#989898]"
          )}
        >
          {name}
        </button>
      ))}
    </nav>
    <div className="ml-auto mt-[5px] flex gap-[9px]">
      <DataBlock name="Scene"><SceneIcon /></DataBlock>
      <DataBlock name="View Layer"><LayerIcon /></DataBlock>
    </div>
  </div>
);

const StatusBar = () => (
  <footer className="flex h-[25px] shrink-0 overflow-hidden bg-[#303030] pt-[4px] leading-[22px] text-[#a6a6a6]">
    <div className="flex w-[387px] gap-2 pl-[18px]">
      <MouseIcon button="left" />
      <span className="mr-[6px]">Select</span>
      <MouseIcon button="drag" />
      <span className="ml-[3px]">Box Select</span>
    </div>
    <div className="flex w-[387px] gap-[7px] pl-[18px]">
      <MouseIcon button="middle" />
      Rotate View
    </div>
    <div className="flex flex-1 gap-[7px] pl-[18px]">
      <MouseIcon button="right" />
      Object Context Menu
    </div>
    <div className="-mt-1 flex rounded-t-md bg-[#34599a] pt-1 text-[#dcdcdc]">
      <span className="flex w-[34px] justify-center border-r border-[#27406e]">
        <Svg>
          <path d="M3 0h16q3 0 3 3v13q0 3-3 3H8l-3 3v-3H3q-3 0-3-3V3q0-3 3-3z" fill="currentColor" stroke="none" />
          <path d="M11 3v3M8.500 8.500H11V15M8 15.500h6.500" stroke="#34599a" strokeWidth="2.4" />
        </Svg>
      </span>
      <span className="px-[14px]">Deleted 3 object(s)</span>
    </div>
    <div className="flex w-[1156px] justify-end gap-[31px] pr-[42px]">
      <span>2.92.0</span>
      <span>00:00:00:00 / 00:00:10:09</span>
      <span className="ml-[10px]">Start Frame (249 left)</span>
    </div>
  </footer>
);

const App = () => (
  <div className="flex h-screen flex-col overflow-hidden bg-[#202020] font-['DejaVu_Sans',sans-serif] text-[16px] leading-5 text-[#e0e0e0] text-shadow-[0_1px_1px_rgb(0_0_0/0.5)]">
    <TitleBar />
    <MenuBar />
    <main className="flex min-h-0 flex-1 gap-[3px] px-[2px] pb-[2px]">
      <div className="flex min-w-0 flex-1 flex-col gap-[3px]">
        <Viewport />
        <Timeline />
      </div>
      <aside className="flex w-[440px] shrink-0 flex-col gap-[3px]">
        <Outliner />
        <Properties />
      </aside>
    </main>
    <StatusBar />
  </div>
);

export default App;
